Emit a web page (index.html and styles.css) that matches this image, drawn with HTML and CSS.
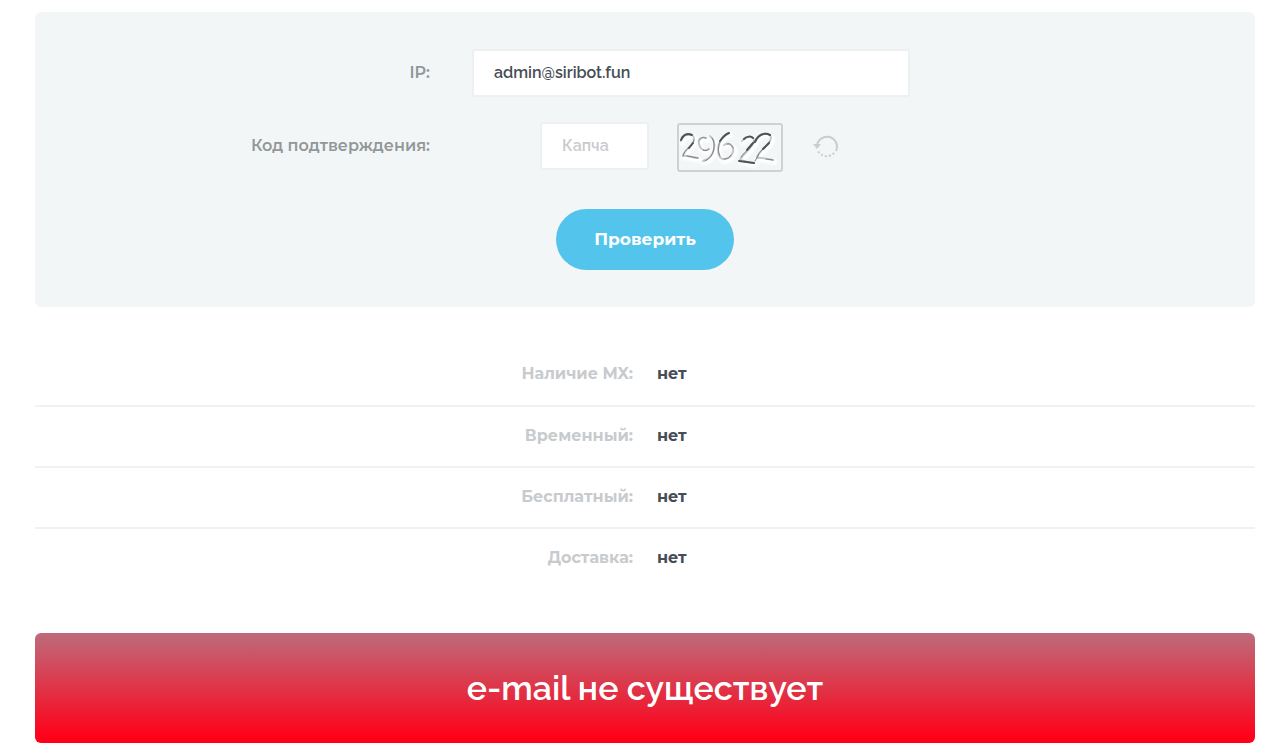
FILE: index.html
```html
<!DOCTYPE html>
<html lang="ru">
<head>
<meta charset="utf-8">
<meta name="viewport" content="width=device-width, initial-scale=1">
<title>Проверка e-mail</title>
<link rel="stylesheet" href="styles.css">
</head>
<body>
<main class="page">
  <form class="check">
    <div class="row">
      <label class="label" for="address">IP:</label>
      <input class="input" id="address" type="text" value="admin@siribot.fun">
    </div>
    <div class="row">
      <label class="label" for="captcha">Код подтверждения:</label>
      <div class="captcha">
        <input class="input input-code" id="captcha" type="text" placeholder="Капча">
        <svg class="captcha-image" viewBox="0 0 102 45" role="img" aria-label="Код">
          <defs>
            <g id="digits">
              <path d="M2 16C5 8 15 7 15 14C15 21 5 24 4 31C9 30 13 33 19 33"/>
              <path d="M27 13C22 11 19 15 20 19C21 24 25 27 30 24M31 11C38 16 37 32 24 36"/>
              <path d="M50 8C44 10 39 17 39 25C39 31 42 35 46 34C53 33 57 24 52 20C50 18 48 18 45 20"/>
              <path d="M63 16C67 11 75 10 75 15C75 22 65 27 61 35C66 36 70 38 75 38"/>
              <path d="M75 18C79 7 92 6 92 13C91 21 79 25 78 33C82 32 88 34 94 35"/>
            </g>
          </defs>
          <use href="#digits" class="digits-glow" x="1" y="2"/>
          <use href="#digits" class="digits-light" x="2" y="2"/>
          <use href="#digits" class="digits-gray"/>
          <g class="digits-mid">
            <path d="M15 15C14 21 5 24 4 31M8 31L19 33"/>
            <path d="M20 15C22 12 25 12 27 13M24 25C26 26 28 26 30 24M33 13C37 18 36 32 26 36"/>
            <path d="M45 11C39 17 38 26 41 31M48 19C51 18 53 20 54 23M45 34C48 34 50 33 52 30"/>
            <path d="M75 16C74 22 66 26 62 32M76 36L79 31M87 34L94 35"/>
            <path d="M91 16C88 22 81 25 78 32"/>
          </g>
          <g class="digits-dark">
            <path d="M2 15C4 10 8 8 13 10M14 18L10 23"/>
            <path d="M50 8C47 9 44 12 41 16"/>
            <path d="M65 14C68 11 72 11 74 13M74 18L68 25M60 36L75 38"/>
            <path d="M76 17C79 10 85 7 91 10M90 18L84 24"/>
          </g>
        </svg>
        <button class="refresh" type="button" aria-label="Обновить код">
          <svg class="refresh-icon" viewBox="0 0 26 26">
            <path class="arc" d="M4 12A10 10 0 1 1 23 17"/>
            <path class="dots" d="M21 19A10 10 0 0 1 5 17"/>
            <path class="head" d="M0 10H8L4 15Z"/>
          </svg>
        </button>
      </div>
    </div>
    <button class="submit" type="submit">Проверить</button>
  </form>

  <table class="results">
    <tbody>
      <tr><th scope="row">Наличие MX:</th><td>нет</td></tr>
      <tr><th scope="row">Временный:</th><td>нет</td></tr>
      <tr><th scope="row">Бесплатный:</th><td>нет</td></tr>
      <tr><th scope="row">Доставка:</th><td>нет</td></tr>
    </tbody>
  </table>

  <p class="verdict">e-mail не существует</p>
</main>
</body>
</html>
```
FILE: styles.css
```css
* {
  box-sizing: border-box;
}

body {
  margin: 0;
  background: #fff;
  color: #464d54;
  font: 600 16px/24px Montserrat, Inter, "Open Sans", sans-serif;
}

.page {
  padding: 12px 27px 8px 35px;
}

.check {
  display: flex;
  flex-direction: column;
  gap: 25px;
  padding: 37px 0;
  border-radius: 6px;
  background: #f2f6f7;
}

.row {
  display: grid;
  grid-template-columns: 395fr 438fr 303fr;
  column-gap: 42px;
  align-items: start;
}

.label {
  color: #929799;
  line-height: 48px;
  text-align: right;
}

.input {
  width: 100%;
  height: 48px;
  padding: 0 20px 2px;
  border: 2px solid #edf0f2;
  border-radius: 2px;
  background: #fff;
  color: #464d54;
  font: 600 16px/24px Raleway, Inter, "Open Sans", sans-serif;
}

.input::placeholder {
  color: #c8cbce;
  opacity: 1;
}

.captcha {
  display: flex;
  align-items: flex-start;
  justify-content: center;
}

.input-code {
  width: 109px;
}

.captcha-image {
  width: 106px;
  height: 49px;
  margin: 1px 30px 0 28px;
  border: 2px solid #cfd2d4;
  border-radius: 3px;
  fill: none;
  stroke-linecap: round;
  stroke-linejoin: round;
}

.digits-glow {
  stroke: #f9fafb;
  stroke-width: 7;
}

.digits-light {
  stroke: #fff;
  stroke-width: 3;
}

.digits-gray {
  stroke: #c3c7c9;
  stroke-width: 2;
}

.digits-mid {
  stroke: #7f8386;
  stroke-width: 1;
}

.digits-dark {
  stroke: #505356;
  stroke-width: 2;
}

.refresh {
  align-self: center;
  width: 29px;
  height: 26px;
  padding: 0;
  border: 0;
  background: none;
}

.refresh-icon {
  display: block;
  width: 26px;
  height: 26px;
  fill: none;
  stroke: #cacdcf;
  stroke-width: 2;
}

.dots {
  stroke-dasharray: 2 2;
}

.head {
  fill: #cacdcf;
  stroke: none;
}

.submit {
  align-self: center;
  height: 61px;
  margin-top: 12px;
  padding: 0 38px 2px;
  border: 0;
  border-radius: 31px;
  background: #53c4eb;
  color: #fff;
  font: 700 17px/24px Montserrat, Inter, "Open Sans", sans-serif;
}

.results {
  width: 100%;
  margin: 38px 0 44px;
  border-collapse: collapse;
  table-layout: fixed;
}

.results th,
.results td {
  height: 61px;
  padding: 0 12px 2px;
  font-size: 16px;
  font-weight: 700;
  line-height: 24px;
}

.results th {
  color: #c8cbce;
  text-align: right;
}

.results tr + tr {
  border-top: 2px solid #f0f1f2;
}

.verdict {
  margin: 0;
  padding: 33px 20px;
  border-radius: 6px;
  background: linear-gradient(#bd6c7b, #ff0018 96%);
  color: #fff;
  font: 600 34px/44px Raleway, Inter, "Open Sans", sans-serif;
  text-align: center;
}
```
